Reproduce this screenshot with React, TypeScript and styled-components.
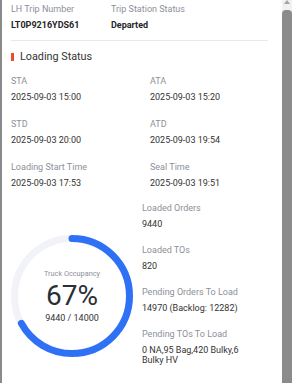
import React from "react";
import styled, { createGlobalStyle } from "styled-components";

const GlobalStyle = createGlobalStyle`
  html, body { margin: 0; padding: 0; background: #ffffff; }
  body { font-family: Roboto, "Liberation Sans", Arial, sans-serif; overflow: hidden; }
  * { box-sizing: border-box; }
`;

const Screen = styled.div`
  display: flex;
  width: 292px;
  height: 383px;
  overflow: hidden;
  background: #ffffff;
`;

const Panel = styled.div`
  flex: 1;
  min-width: 0;
  border-left: 2px solid #8a8a8a;
  padding: 3px 14px 0 9px;
`;

const HeaderGrid = styled.div`
  display: grid;
  grid-template-columns: 100px 1fr;
`;

const Field = styled.div`
  display: flex;
  flex-direction: column;
  gap: 5px;
`;

const Label = styled.div`
  font-size: 9px;
  line-height: 12px;
  color: #8c9099;
  white-space: nowrap;
`;

const Value = styled.div<{ $bold?: boolean }>`
  font-size: 9px;
  line-height: 10px;
  color: ${(p) => (p.$bold ? "#262626" : "#333333")};
  font-weight: ${(p) => (p.$bold ? 700 : 400)};
`;

const Divider = styled.div`
  height: 1px;
  background: #e9e9e9;
  margin: 10px 0 9px 0;
`;

const SectionTitle = styled.div`
  display: flex;
  align-items: center;
  gap: 6px;
  font-size: 10.8px;
  line-height: 14px;
  color: #333333;
  margin-bottom: 11px;
`;

const TitleMark = styled.span`
  width: 3px;
  height: 8px;
  background: #ee4d2d;
  flex: none;
`;

const TimeGrid = styled.div`
  display: grid;
  grid-template-columns: 139px 1fr;
  row-gap: 16px;
`;

const Lower = styled.div`
  display: flex;
  align-items: flex-start;
  margin-top: 14px;
`;

const GaugeWrap = styled.div`
  display: grid;
  width: 122px;
  height: 122px;
  margin-top: 33px;
  flex: none;
`;

const GaugeSvg = styled.svg`
  grid-area: 1 / 1;
  width: 122px;
  height: 122px;
`;

const GaugeCenter = styled.div`
  grid-area: 1 / 1;
  display: flex;
  flex-direction: column;
  align-items: center;
  justify-content: center;
  padding-top: 1px;
`;

const GaugeCaption = styled.div`
  font-size: 7.3px;
  line-height: 9px;
  color: #8c9099;
`;

const GaugePercent = styled.div`
  font-size: 28px;
  line-height: 30px;
  color: #2b2f36;
  margin-top: 3px;
`;

const GaugeCount = styled.div`
  font-size: 9px;
  line-height: 11px;
  color: #333333;
  margin-top: 2px;
`;

const Stats = styled.div`
  display: flex;
  flex-direction: column;
  gap: 15px;
  margin-left: 9px;
  width: 116px;
`;

const ScrollBar = styled.div`
  width: 10px;
  flex: none;
  display: flex;
  flex-direction: column;
  background: #f1f1f1;
`;

const ScrollArrow = styled.div`
  height: 10px;
  display: flex;
  justify-content: center;
  align-items: flex-start;
  padding-left: 0px;
`;

const ArrowTip = styled.span`
  width: 0;
  height: 0;
  border-left: 3.5px solid transparent;
  border-right: 3.5px solid transparent;
  border-bottom: 4px solid #a3a3a3;
`;

const ScrollThumb = styled.div`
  flex: 1;
  background: #8b8b8b;
  border-radius: 4px 4px 0 0;
`;

const Gauge: React.FC<{ percent: number }> = ({ percent }) => {
  const r = 57.5;
  const c = 2 * Math.PI * r;
  const len = (c * percent) / 100;
  return (
    <GaugeWrap>
      <GaugeSvg viewBox="0 0 122 122">
        <circle cx="61" cy="61" r={r} fill="none" stroke="#f1f3f8" strokeWidth="7" />
        <circle
          cx="61"
          cy="61"
          r={r}
          fill="none"
          stroke="#2f71f5"
          strokeWidth="7"
          strokeLinecap="round"
          strokeDasharray={`${len} ${c}`}
          transform="rotate(-90 61 61)"
        />
      </GaugeSvg>
      <GaugeCenter>
        <GaugeCaption>Truck Occupancy</GaugeCaption>
        <GaugePercent>{percent}%</GaugePercent>
        <GaugeCount>9440 / 14000</GaugeCount>
      </GaugeCenter>
    </GaugeWrap>
  );
};

const times = [
  ["STA", "2025-09-03 15:00"],
  ["ATA", "2025-09-03 15:20"],
  ["STD", "2025-09-03 20:00"],
  ["ATD", "2025-09-03 19:54"],
  ["Loading Start Time", "2025-09-03 17:53"],
  ["Seal Time", "2025-09-03 19:51"],
];

const stats = [
  ["Loaded Orders", "9440"],
  ["Loaded TOs", "820"],
  ["Pending Orders To Load", "14970 (Backlog: 12282)"],
  ["Pending TOs To Load", "0 NA,95 Bag,420 Bulky,6 Bulky HV"],
];

export default function App() {
  return (
    <>
      <GlobalStyle />
      <Screen>
        <Panel>
          <HeaderGrid>
            <Field>
              <Label>LH Trip Number</Label>
              <Value $bold>LT0P9216YDS61</Value>
            </Field>
            <Field>
              <Label>Trip Station Status</Label>
              <Value $bold>Departed</Value>
            </Field>
          </HeaderGrid>
          <Divider />
          <SectionTitle>
            <TitleMark />
            Loading Status
          </SectionTitle>
          <TimeGrid>
            {times.map(([l, v]) => (
              <Field key={l}>
                <Label>{l}</Label>
                <Value>{v}</Value>
              </Field>
            ))}
          </TimeGrid>
          <Lower>
            <Gauge percent={67} />
            <Stats>
              {stats.map(([l, v]) => (
                <Field key={l}>
                  <Label>{l}</Label>
                  <Value>{v}</Value>
                </Field>
              ))}
            </Stats>
          </Lower>
        </Panel>
        <ScrollBar>
          <ScrollArrow>
            <ArrowTip />
          </ScrollArrow>
          <ScrollThumb />
        </ScrollBar>
      </Screen>
    </>
  );
}
